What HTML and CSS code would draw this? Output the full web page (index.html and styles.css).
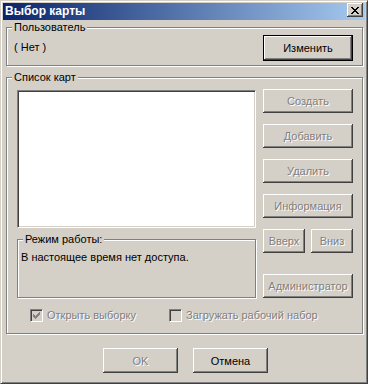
FILE: index.html
```html
<!DOCTYPE html>
<html lang="ru">
<head>
<meta charset="utf-8">
<title>Выбор карты</title>
<link rel="stylesheet" href="styles.css">
</head>
<body>
<div class="window">
  <div class="titlebar">
    <span class="title">Выбор карты</span>
    <button class="close" type="button" aria-label="Закрыть">
      <svg width="8" height="7" viewBox="0 0 8 7" shape-rendering="crispEdges">
        <path d="M0 0h2v1h-2zM6 0h2v1h-2zM1 1h2v1h-2zM5 1h2v1h-2zM2 2h4v1h-4zM3 3h2v1h-2zM2 4h4v1h-4zM1 5h2v1h-2zM5 5h2v1h-2zM0 6h2v1h-2zM6 6h2v1h-2z" fill="#000"/>
      </svg>
    </button>
  </div>
  <div class="content">
    <fieldset class="group user">
      <legend>Пользователь</legend>
      <div class="user-row">
        <span class="user-name">( Нет )</span>
        <button class="btn default" type="button">Изменить</button>
      </div>
    </fieldset>

    <fieldset class="group maps">
      <legend>Список карт</legend>
      <div class="maps-grid">
        <div class="left-col">
          <div class="listbox"></div>
          <fieldset class="group mode">
            <legend>Режим работы:</legend>
            <div class="mode-text">В настоящее время нет доступа.</div>
          </fieldset>
        </div>
        <div class="right-col">
          <button class="btn side" type="button" disabled>Создать</button>
          <button class="btn side" type="button" disabled>Добавить</button>
          <button class="btn side" type="button" disabled>Удалить</button>
          <button class="btn side" type="button" disabled>Информация</button>
          <div class="updown">
            <button class="btn side" type="button" disabled>Вверх</button>
            <button class="btn side" type="button" disabled>Вниз</button>
          </div>
          <button class="btn side admin" type="button" disabled>Администратор</button>
        </div>
      </div>
      <div class="checks">
        <label class="check first">
          <span class="box">
            <svg width="7" height="7" viewBox="0 0 7 7" shape-rendering="crispEdges">
              <path d="M6 0h1v3h-1zM5 1h1v3h-1zM4 2h1v3h-1zM3 3h1v3h-1zM2 4h1v3h-1zM1 3h1v3h-1zM0 2h1v3h-1z" fill="#808080"/>
            </svg>
          </span>
          <span class="check-label">Открыть выборку</span>
        </label>
        <label class="check">
          <span class="box"></span>
          <span class="check-label">Загружать рабочий набор</span>
        </label>
      </div>
    </fieldset>

    <div class="footer">
      <button class="btn foot" type="button" disabled>OK</button>
      <button class="btn foot" type="button">Отмена</button>
    </div>
  </div>
</div>
</body>
</html>
```

FILE: styles.css
```css
html, body {
  margin: 0;
  padding: 0;
  background: #d4d0c8;
}

body {
  font-family: "Liberation Sans", Arial, sans-serif;
  font-size: 11px;
  color: #000;
}

.window {
  box-sizing: border-box;
  width: 368px;
  height: 384px;
  border: 1px solid;
  border-color: #d4d0c8 #404040 #404040 #d4d0c8;
  box-shadow: inset 1px 1px 0 #fff, inset -1px -1px 0 #808080;
  padding: 2px;
  background: #d4d0c8;
}

.titlebar {
  height: 17px;
  display: flex;
  align-items: flex-start;
  justify-content: space-between;
  padding: 0 2px 0 2px;
  background: linear-gradient(to right, #0a246a, #a6caf0);
}

.title {
  color: #fff;
  font-weight: bold;
  font-size: 12px;
  line-height: 17px;
}

.close {
  width: 16px;
  height: 14px;
  margin: 0;
  padding: 0;
  border: 0;
  background: #d4d0c8;
  box-shadow: inset -1px -1px 0 #404040, inset 1px 1px 0 #fff, inset -2px -2px 0 #808080;
  display: flex;
  align-items: center;
  justify-content: center;
  padding-right: 1px;
}

.content {
  display: flex;
  flex-direction: column;
}

.group {
  margin: 0;
  padding: 0;
  min-inline-size: 0;
  border: 1px solid #808080;
  box-shadow: inset 1px 1px 0 #fff, 1px 1px 0 #fff;
}

.group > legend {
  margin-left: 5px;
  padding: 0 2px;
  line-height: 13px;
  height: 13px;
  background: #d4d0c8;
}

.user {
  margin: 1px 2px 0 3px;
}

.user-row {
  display: flex;
  align-items: center;
  justify-content: space-between;
  padding: 1px 9px 4px 7px;
}

.user-name {
  margin-top: -2px;
}

.btn {
  font-family: "Liberation Sans", Arial, sans-serif;
  font-size: 11px;
  color: #000;
  background: #d4d0c8;
  border: 0;
  margin: 0;
  padding: 0;
  box-shadow: inset -1px -1px 0 #404040, inset 1px 1px 0 #fff, inset -2px -2px 0 #808080;
}

.btn:disabled {
  color: #808080;
  text-shadow: 1px 1px 0 #fff;
}

.btn.default {
  width: 90px;
  height: 26px;
  box-shadow: inset 0 0 0 1px #000, inset -2px -2px 0 #404040, inset 2px 2px 0 #fff, inset -3px -3px 0 #808080;
}

.maps {
  margin: 5px 2px 0 3px;
}

.maps-grid {
  display: flex;
  gap: 7px;
  padding: 5px 9px 0 10px;
}

.left-col {
  width: 239px;
  display: flex;
  flex-direction: column;
}

.listbox {
  box-sizing: border-box;
  height: 138px;
  margin-top: 1px;
  background: #fff;
  border: 1px solid;
  border-color: #808080 #fff #fff #808080;
  box-shadow: inset 1px 1px 0 #404040, inset -1px -1px 0 #d4d0c8;
}

.mode {
  margin-top: 5px;
  height: 65px;
  box-sizing: border-box;
}

.mode-text {
  padding: 5px 3px 0 3px;
  line-height: 13px;
}

.right-col {
  width: 90px;
  display: flex;
  flex-direction: column;
  gap: 11px;
}

.btn.side {
  height: 24px;
  width: 100%;
}

.updown {
  display: flex;
  gap: 6px;
}

.updown .btn.side {
  width: 42px;
}

.admin {
  margin-top: 10px;
}

.checks {
  display: flex;
  padding: 11px 0 11px 23px;
}

.check {
  display: flex;
  align-items: center;
  gap: 4px;
  color: #808080;
  text-shadow: 1px 1px 0 #fff;
}

.check.first {
  width: 139px;
}

.box {
  box-sizing: border-box;
  width: 13px;
  height: 13px;
  border: 1px solid;
  border-color: #808080 #fff #fff #808080;
  box-shadow: inset 1px 1px 0 #404040, inset -1px -1px 0 #d4d0c8;
  background: #d4d0c8;
  display: flex;
  align-items: center;
  justify-content: center;
}

.check-label {
  line-height: 13px;
}

.footer {
  display: flex;
  justify-content: center;
  gap: 15px;
  padding-left: 3px;
  margin-top: 14px;
}

.btn.foot {
  width: 75px;
  height: 25px;
}
```
